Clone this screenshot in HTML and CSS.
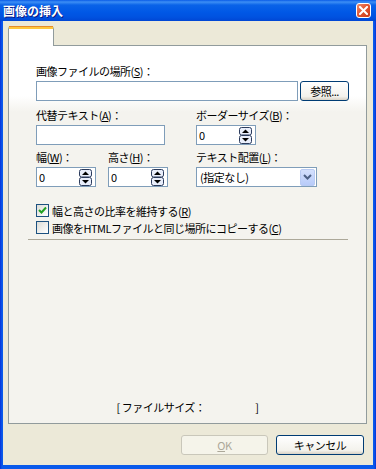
FILE: index.html
```html
<!DOCTYPE html>
<html lang="ja">
<head>
    <meta charset="UTF-8">
    <title>画像の挿入</title>
    <link rel="stylesheet" href="styles.css">
</head>
<body>
    <div class="window">
        <div class="titlebar">
            <span class="title">画像の挿入</span>
            <span class="close">
                <svg width="9" height="9" viewBox="0 0 9 9"><path d="M1 1L8 8M8 1L1 8" stroke="#fff" stroke-width="2" stroke-linecap="square"/></svg>
            </span>
        </div>
        <div class="client">
            <div class="tabs"><div class="tab"></div></div>
            <div class="panel">
                <div class="label first">画像ファイルの場所(<u>S</u>)：</div>
                <div class="path-row">
                    <div class="edit path"></div>
                    <button class="btn browse">参照...</button>
                </div>

                <div class="grid">
                    <div class="label span2">代替テキスト(<u>A</u>)：</div>
                    <div class="label">ボーダーサイズ(<u>B</u>)：</div>
                    <div class="edit alt span2"></div>
                    <div class="spin">
                        <span>0</span>
                        <svg width="13" height="17" viewBox="0 0 13 17"><rect x="0.5" y="0.5" width="12" height="7.5" rx="2" fill="#E9EEFB" stroke="#2B3B5C"/><rect x="0.5" y="8.5" width="12" height="8" rx="2" fill="#E9EEFB" stroke="#2B3B5C"/><path d="M3 6h7L6.5 2.5z" fill="#000"/><path d="M3 11h7l-3.5 3.5z" fill="#000"/></svg>
                    </div>

                    <div class="label row3">幅(<u>W</u>)：</div>
                    <div class="label row3">高さ(<u>H</u>)：</div>
                    <div class="label row3">テキスト配置(<u>L</u>)：</div>
                    <div class="spin">
                        <span>0</span>
                        <svg width="13" height="17" viewBox="0 0 13 17"><rect x="0.5" y="0.5" width="12" height="7.5" rx="2" fill="#E9EEFB" stroke="#2B3B5C"/><rect x="0.5" y="8.5" width="12" height="8" rx="2" fill="#E9EEFB" stroke="#2B3B5C"/><path d="M3 6h7L6.5 2.5z" fill="#000"/><path d="M3 11h7l-3.5 3.5z" fill="#000"/></svg>
                    </div>
                    <div class="spin">
                        <span>0</span>
                        <svg width="13" height="17" viewBox="0 0 13 17"><rect x="0.5" y="0.5" width="12" height="7.5" rx="2" fill="#E9EEFB" stroke="#2B3B5C"/><rect x="0.5" y="8.5" width="12" height="8" rx="2" fill="#E9EEFB" stroke="#2B3B5C"/><path d="M3 6h7L6.5 2.5z" fill="#000"/><path d="M3 11h7l-3.5 3.5z" fill="#000"/></svg>
                    </div>
                    <div class="combo">
                        <span>(指定なし)</span>
                        <span class="drop">
                            <svg width="9" height="6" viewBox="0 0 9 6"><path d="M1 1l3.5 3.5L8 1" stroke="#4D6185" stroke-width="2" fill="none"/></svg>
                        </span>
                    </div>
                </div>

                <div class="checks">
                    <div class="check">
                        <span class="box">
                            <svg width="9" height="9" viewBox="0 0 9 9"><path d="M1 4l2.5 2.5L8 1.5" stroke="#21A121" stroke-width="2" fill="none"/></svg>
                        </span>
                        <span>幅と高さの比率を維持する(<u>R</u>)</span>
                    </div>
                    <div class="check">
                        <span class="box"></span>
                        <span>画像をHTMLファイルと同じ場所にコピーする(<u>C</u>)</span>
                    </div>
                </div>

                <div class="separator"></div>

                <div class="filesize">
                    <span>[ ファイルサイズ：</span>
                    <span class="size"></span>
                    <span>]</span>
                </div>
            </div>

            <div class="actions">
                <button class="btn ok" disabled><u>O</u>K</button>
                <button class="btn cancel">キャンセル</button>
            </div>
        </div>
    </div>
</body>
</html>
```

FILE: styles.css
```css
body {
    margin: 0;
    font-family: "Noto Sans CJK JP", "Noto Sans", sans-serif;
    font-size: 11px;
    letter-spacing: -0.5px;
    color: #000;
}
.window {
    width: 376px;
    height: 469px;
    display: flex;
    flex-direction: column;
    background: linear-gradient(to right, #0831D9, #0A5AEB 2px, #0A5AEB 374px, #0831D9);
}
.titlebar {
    height: 21px;
    display: flex;
    align-items: center;
    justify-content: space-between;
    padding: 0 5px 0 3px;
    background: linear-gradient(#0A5CE7 0, #3D8FF5 2px, #0A63E8 5px, #0058E6 12px, #0052E0 17px, #0046D4 21px);
}
.title {
    color: white;
    font-weight: bold;
    font-size: 12px;
    letter-spacing: 0;
    text-shadow: 1px 1px #0A1883;
}
.close {
    width: 15px;
    height: 15px;
    box-sizing: border-box;
    border: 1px solid white;
    border-radius: 3px;
    background: linear-gradient(135deg, #F08B6C, #E0532F 50%, #C93A18);
    display: flex;
    align-items: center;
    justify-content: center;
}
.client {
    flex: 1;
    margin: 0 3px 4px;
    padding: 5px 6px 0 5px;
    background-color: #ECE9D8;
}
.tabs {
    height: 19px;
}
.tab {
    position: relative;
    width: 46px;
    height: 20px;
    box-sizing: border-box;
    border-left: 1px solid #919B9C;
    border-right: 1px solid #919B9C;
    border-top: 3px solid #FFC73C;
    border-radius: 3px 3px 0 0;
    background-color: white;
    z-index: 1;
}
.tab::before {
    content: "";
    display: block;
    height: 1px;
    margin-top: -3px;
    background-color: #E68B2C;
}
.panel {
    height: 379px;
    box-sizing: border-box;
    border: 1px solid #919B9C;
    padding: 0 0 0 27px;
    display: flex;
    flex-direction: column;
    background: linear-gradient(#FFFFFF 0, #FFFFFF 50px, #F4F3EE 66px, #F4F3EE 100%);
}
.label {
    line-height: 14px;
    white-space: nowrap;
}
.label.first {
    margin-top: 18px;
}
.path-row {
    display: flex;
    gap: 2px;
    margin-top: 3px;
}
.edit {
    height: 20px;
    box-sizing: border-box;
    border: 1px solid #7F9DB9;
    background-color: white;
}
.path {
    width: 262px;
}
.btn {
    font-family: inherit;
    font-size: 11px;
    letter-spacing: -0.5px;
    color: #000;
    height: 20px;
    padding: 0;
    border: 1px solid #003C74;
    border-radius: 3px;
    background: linear-gradient(#FFFFFF, #F3F2EC 80%, #D8D2C6);
}
.browse {
    width: 49px;
}
.grid {
    display: grid;
    grid-template-columns: 72px 88px 1fr;
    row-gap: 3px;
    margin-top: 7px;
}
.span2 {
    grid-column: span 2;
}
.alt {
    width: 129px;
}
.label.row3 {
    margin-top: 2px;
}
.spin {
    width: 60px;
    height: 20px;
    box-sizing: border-box;
    border: 1px solid #7F9DB9;
    background-color: white;
    display: flex;
    align-items: center;
    justify-content: space-between;
    padding: 0 3px 0 2px;
}
.combo {
    width: 121px;
    height: 20px;
    box-sizing: border-box;
    border: 1px solid #7F9DB9;
    background-color: white;
    display: flex;
    align-items: center;
    justify-content: space-between;
    padding: 0 1px 0 3px;
}
.drop {
    width: 15px;
    height: 17px;
    box-sizing: border-box;
    border: 1px solid #B9CBF3;
    border-radius: 2px;
    background: linear-gradient(#D4E0FD, #B8CBF9);
    display: flex;
    align-items: center;
    justify-content: center;
}
.checks {
    margin-top: 17px;
    display: flex;
    flex-direction: column;
    gap: 4px;
}
.check {
    display: flex;
    align-items: center;
    gap: 3px;
    height: 13px;
    white-space: nowrap;
}
.box {
    width: 13px;
    height: 13px;
    box-sizing: border-box;
    border: 1px solid #1C5180;
    background: linear-gradient(135deg, #DCDCD7, #FFFFFF);
    display: flex;
    align-items: center;
    justify-content: center;
}
.separator {
    width: 320px;
    margin: 5px 0 0 -8px;
    border-top: 1px solid #ACA899;
}
.filesize {
    margin: auto 0 9px -27px;
    display: flex;
    justify-content: center;
    line-height: 14px;
}
.size {
    width: 50px;
}
.actions {
    display: flex;
    justify-content: flex-end;
    gap: 8px;
    margin-top: 11px;
    padding-right: 3px;
}
.ok {
    width: 87px;
    color: #ACA899;
    border-color: #C9C7BA;
    background: #F5F4EA;
}
.cancel {
    width: 88px;
}
```
